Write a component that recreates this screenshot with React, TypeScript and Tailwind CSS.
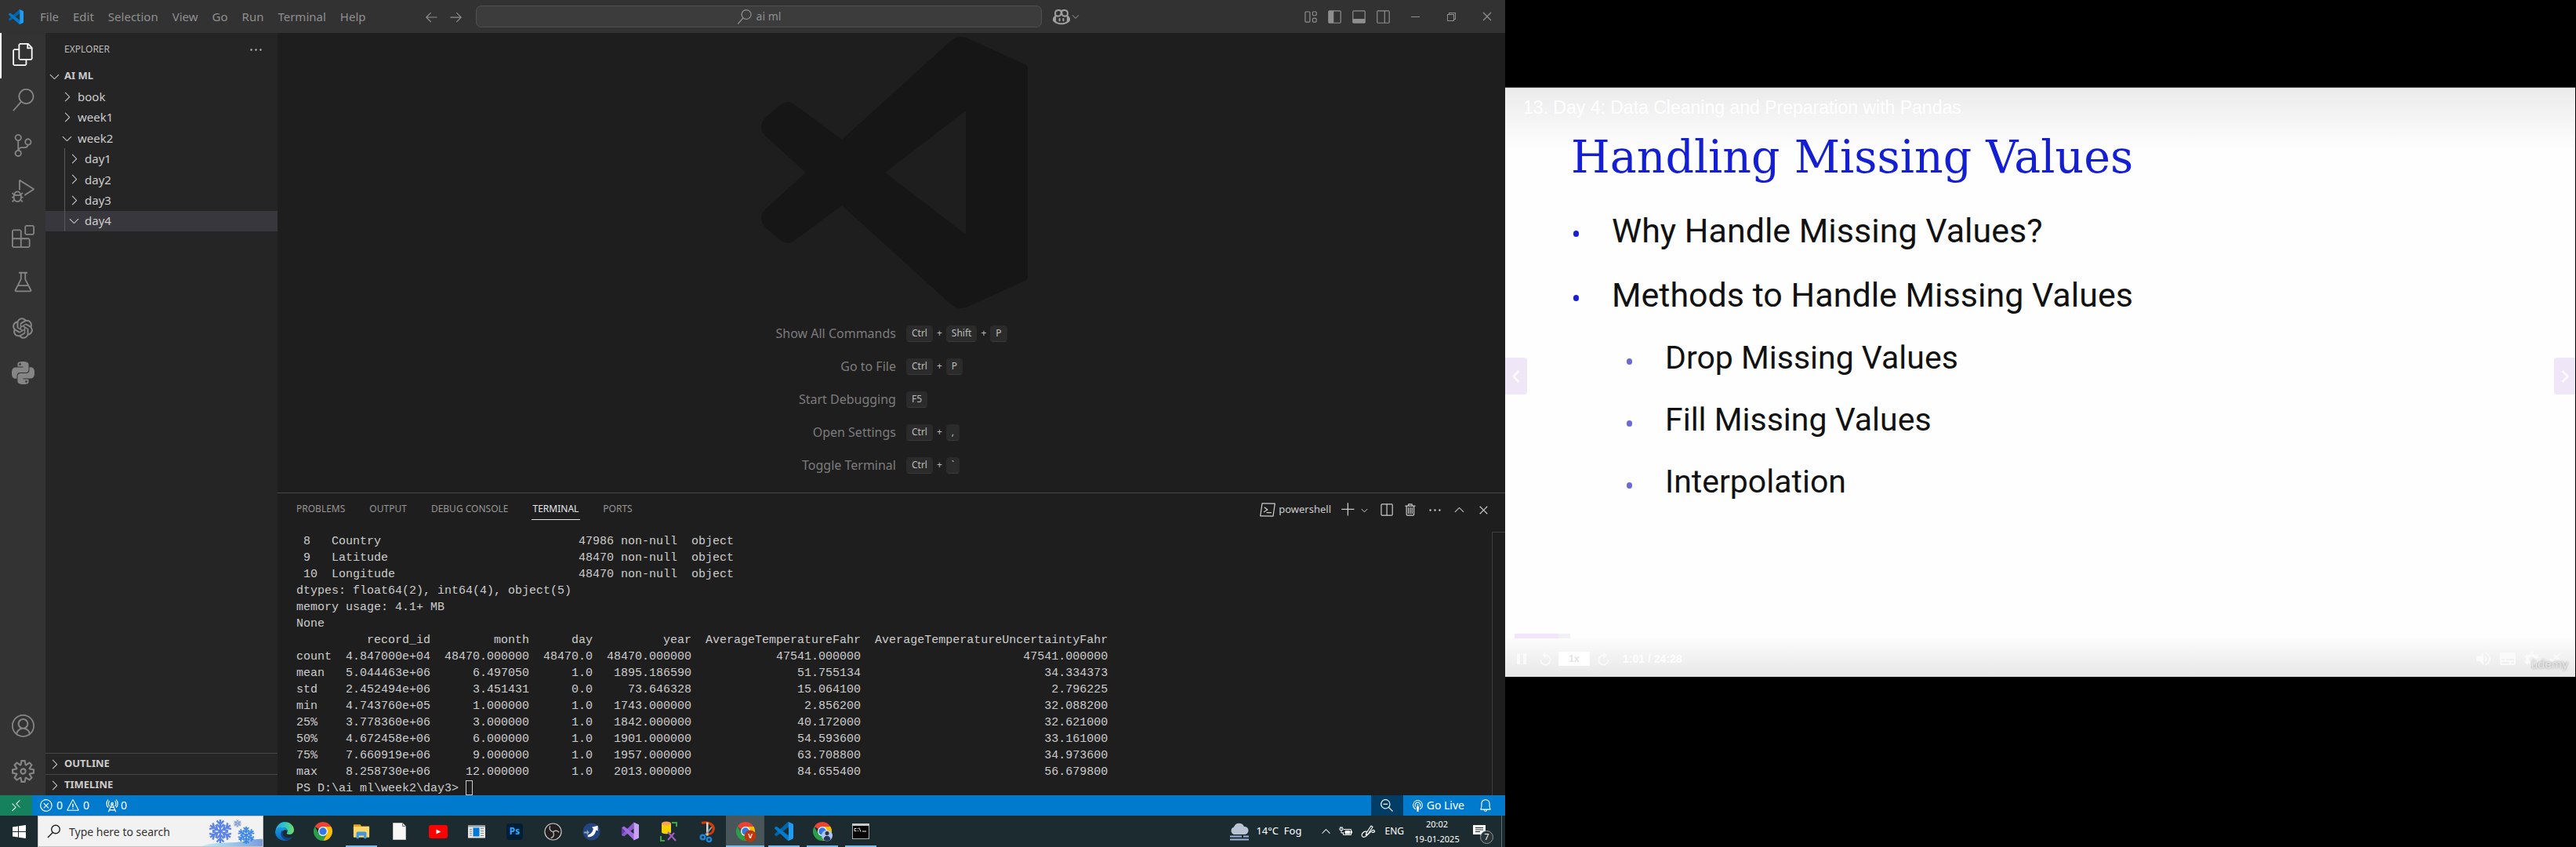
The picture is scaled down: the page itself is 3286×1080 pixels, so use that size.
import type { ReactNode } from "react";
import {
  VscFiles, VscSearch, VscSourceControl, VscDebugAlt, VscExtensions, VscBeaker, VscAccount, VscSettingsGear,
  VscChevronRight, VscChevronDown, VscChevronUp, VscEllipsis, VscArrowLeft, VscArrowRight, VscCopilot, VscLayout,
  VscLayoutSidebarLeft, VscLayoutPanel, VscLayoutSidebarRightOff, VscChromeMinimize, VscChromeRestore,
  VscChromeClose, VscTerminalPowershell, VscAdd, VscSplitHorizontal, VscTrash, VscClose, VscRemote, VscError,
  VscWarning, VscRadioTower, VscZoomOut, VscBroadcast, VscBell,
} from "react-icons/vsc";
import { SiPython } from "react-icons/si";
import { AiOutlineOpenAI } from "react-icons/ai";
import { MdPause, MdReplay, MdVolumeUp, MdSubtitles, MdSettings, MdCloseFullscreen } from "react-icons/md";

const UI = "font-['Noto_Sans','Liberation_Sans',sans-serif]";

/* ---------- VS Code ---------- */

function CodeLogo({ className }: { className: string }) {
  return (
    <svg viewBox="0 0 100 100" className={className} aria-hidden="true">
      <path d="M96.5 10.6 75.9.9a6.2 6.2 0 0 0-7.1 1.2L1.4 63.6a4.2 4.2 0 0 0 0 6.2l5.5 5a4.2 4.2 0 0 0 5.3.2l81.2-61.6c2.7-2 6.600-.1 6.600 3.300v-.2a6.200 6.200 0 0 0-3.500-5.900Z" fill="#0065a9" />
      <path d="m96.500 89.400-20.600 9.700a6.200 6.200 0 0 1-7.100-1.200L1.400 36.400a4.200 4.200 0 0 1 0-6.200l5.500-5a4.200 4.200 0 0 1 5.300-.2l81.200 61.600c2.700 2 6.600.1 6.600-3.300v.2a6.200 6.200 0 0 1-3.500 5.900Z" fill="#007acc" />
      <path d="M75.900 99.100a6.200 6.200 0 0 1-7.100-1.200c2.300 2.300 6.200.7 6.200-2.600V4.700c0-3.300-3.900-4.900-6.200-2.600a6.200 6.200 0 0 1 7.100-1.200l20.600 9.900a6.200 6.200 0 0 1 3.500 5.600v67.200a6.200 6.200 0 0 1-3.500 5.600Z" fill="#1f9cf0" />
    </svg>
  );
}

const menus = ["File", "Edit", "Selection", "View", "Go", "Run", "Terminal", "Help"];

function TitleBar() {
  return (
    <header className="flex h-[42px] shrink-0 items-center bg-[#323233] text-[15px] text-[#8f8f8f]">
      <div className="flex w-[600px] shrink-0 items-center">
        <CodeLogo className="ml-[11px] h-[19px] w-[19px]" />
        <nav className="ml-3 flex" aria-label="Menu bar">
          {menus.map((m) => (
            <button key={m} className="px-[9px]">{m}</button>
          ))}
        </nav>
        <div className="ml-auto flex gap-3 pr-[9px]">
          <button aria-label="Go back"><VscArrowLeft size={19} /></button>
          <button aria-label="Go forward"><VscArrowRight size={19} /></button>
        </div>
      </div>
      <button className="ml-[7px] flex h-7 w-[722px] items-center justify-center gap-[6px] rounded-[7px] border border-[#505051] bg-[#3c3c3c] text-sm">
        <VscSearch size={19} />
        ai ml
      </button>
      <button aria-label="Copilot" className="ml-[14px] flex items-center">
        <VscCopilot size={22} className="text-[#a0a0a0]" />
        <VscChevronDown size={14} />
      </button>
      <div className="ml-auto flex items-center gap-3 pr-[6px]">
        <button aria-label="Customize layout"><VscLayout size={19} /></button>
        <button aria-label="Toggle side bar"><VscLayoutSidebarLeft size={19} /></button>
        <button aria-label="Toggle panel"><VscLayoutPanel size={19} /></button>
        <button aria-label="Toggle secondary side bar"><VscLayoutSidebarRightOff size={19} /></button>
        <button aria-label="Minimize" className="ml-[2px] flex w-[34px] justify-center"><VscChromeMinimize size={16} /></button>
        <button aria-label="Restore" className="flex w-[34px] justify-center"><VscChromeRestore size={16} /></button>
        <button aria-label="Close" className="flex w-[34px] justify-center"><VscChromeClose size={16} /></button>
      </div>
    </header>
  );
}

function Activity({ label, active, children }: { label: string; active?: boolean; children: ReactNode }) {
  return (
    <button
      aria-label={label}
      className={
        active
          ? "flex h-[58px] w-full items-center justify-center border-l-2 border-white pr-[2px] pb-[3px] text-white"
          : "flex h-[58px] w-full items-center justify-center pb-[3px] text-[#858585]"
      }
    >
      {children}
    </button>
  );
}

function ActivityBar() {
  return (
    <nav aria-label="Activity bar" className="flex w-[58px] shrink-0 flex-col justify-between bg-[#333333]">
      <div>
        <Activity label="Explorer" active><VscFiles size={29} /></Activity>
        <Activity label="Search"><VscSearch size={29} /></Activity>
        <Activity label="Source control"><VscSourceControl size={29} /></Activity>
        <Activity label="Run and debug"><VscDebugAlt size={29} /></Activity>
        <Activity label="Extensions"><VscExtensions size={29} /></Activity>
        <Activity label="Testing"><VscBeaker size={29} /></Activity>
        <Activity label="ChatGPT"><AiOutlineOpenAI size={34} /></Activity>
        <Activity label="Python"><SiPython size={29} /></Activity>
      </div>
      <div>
        <Activity label="Accounts"><VscAccount size={29} /></Activity>
        <Activity label="Manage"><VscSettingsGear size={29} /></Activity>
      </div>
    </nav>
  );
}

const tree = [
  { name: "book", depth: 0, open: false },
  { name: "week1", depth: 0, open: false },
  { name: "week2", depth: 0, open: true },
  { name: "day1", depth: 1, open: false },
  { name: "day2", depth: 1, open: false },
  { name: "day3", depth: 1, open: false },
  { name: "day4", depth: 1, open: true },
];

function SideBar() {
  return (
    <aside className="flex w-[296px] shrink-0 flex-col bg-[#252526] text-[#cccccc]">
      <div className="flex h-[42px] items-center justify-between pr-[18px] pl-6 text-xs text-[#bbbbbb]">
        <h2>EXPLORER</h2>
        <button aria-label="Views and more actions"><VscEllipsis size={19} /></button>
      </div>
      <button className="flex h-[26px] items-center gap-[3px] pl-[2px] text-[13px] font-bold">
        <VscChevronDown size={19} />
        AI ML
      </button>
      <ul className="flex h-[185px] flex-col text-[15px]">
        {tree.map((n) => (
          <li key={n.name} className={n.name === "day4" ? "flex flex-1 bg-[#37373d]" : "flex flex-1"}>
            <button className={n.depth ? "ml-6 flex w-full items-center gap-1 border-l border-[#585858] pl-[2px]" : "flex w-full items-center gap-1 pl-[18px]"}>
              {n.open ? <VscChevronDown size={19} /> : <VscChevronRight size={19} />}
              {n.name}
            </button>
          </li>
        ))}
      </ul>
      <div className="mt-auto text-[13px] font-bold">
        {["OUTLINE", "TIMELINE"].map((t) => (
          <button key={t} className="flex h-[27px] w-full items-center gap-[3px] border-t border-[#474748] pl-[2px]">
            <VscChevronRight size={19} />
            {t}
          </button>
        ))}
      </div>
    </aside>
  );
}

const shortcuts = [
  { label: "Show All Commands", keys: ["Ctrl", "Shift", "P"] },
  { label: "Go to File", keys: ["Ctrl", "P"] },
  { label: "Start Debugging", keys: ["F5"] },
  { label: "Open Settings", keys: ["Ctrl", ","] },
  { label: "Toggle Terminal", keys: ["Ctrl", "`"] },
];

function Welcome() {
  return (
    <div className="flex flex-1 flex-col items-center pt-[5px]">
      <svg viewBox="0 0 340 346" className="ml-2 h-[346px] w-[340px]" aria-hidden="true">
        <path
          fill="#161616"
          fillRule="evenodd"
          d="M103 131 242 5Q254-4 266 3L336 35Q340 37 340 40V306Q340 309 336 311L266 343Q254 350 242 341L103 215 42 260Q34 266 26 260L6 244Q-6 231 6 219L57 173 6 127Q-6 115 6 102L26 86Q34 80 42 86ZM261 94 158 173 261 252Z"
        />
      </svg>
      <dl className="mt-[11px] grid grid-cols-[auto_auto] gap-x-[13px]">
        {shortcuts.map((s) => (
          <div key={s.label} className="contents">
            <dt className="flex h-[42px] items-center justify-end text-base text-[#7c7c7c]">{s.label}</dt>
            <dd className="flex h-[42px] items-center gap-[5px] text-xs text-[#bdbdbd]">
              {s.keys.map((k, i) => (
                <span key={k} className="flex items-center gap-[5px]">
                  {i > 0 && <span>+</span>}
                  <kbd className={`${UI} flex h-[21px] min-w-[17px] items-center justify-center rounded border border-b-[#3a3a3b] border-[#2a2a2b] bg-[#2b2b2c] px-[6px]`}>{k}</kbd>
                </span>
              ))}
            </dd>
          </div>
        ))}
      </dl>
    </div>
  );
}

const info = [
  [" 8   Country", "47986 non-null  object"],
  [" 9   Latitude", "48470 non-null  object"],
  [" 10  Longitude", "48470 non-null  object"],
];

const stats = [
  ["", "record_id", "month", "day", "year", "AverageTemperatureFahr", "AverageTemperatureUncertaintyFahr"],
  ["count", "4.847000e+04", "48470.000000", "48470.0", "48470.000000", "47541.000000", "47541.000000"],
  ["mean", "5.044463e+06", "6.497050", "1.0", "1895.186590", "51.755134", "34.334373"],
  ["std", "2.452494e+06", "3.451431", "0.0", "73.646328", "15.064100", "2.796225"],
  ["min", "4.743760e+05", "1.000000", "1.0", "1743.000000", "2.856200", "32.088200"],
  ["25%", "3.778360e+06", "3.000000", "1.0", "1842.000000", "40.172000", "32.621000"],
  ["50%", "4.672458e+06", "6.000000", "1.0", "1901.000000", "54.593600", "33.161000"],
  ["75%", "7.660919e+06", "9.000000", "1.0", "1957.000000", "63.708800", "34.973600"],
  ["max", "8.258730e+06", "12.000000", "1.0", "2013.000000", "84.655400", "56.679800"],
];
const widths = [5, 14, 14, 9, 14, 24, 35];

const output = [
  ...info.map(([a, b]) => a.padEnd(40) + b),
  "dtypes: float64(2), int64(4), object(5)",
  "memory usage: 4.1+ MB",
  "None",
  ...stats.map((r) => r.map((c, i) => (i === 0 ? c.padEnd(5) : c.padStart(widths[i]))).join("")),
].join("\n");

const tabs = ["PROBLEMS", "OUTPUT", "DEBUG CONSOLE", "TERMINAL", "PORTS"];

function Panel() {
  return (
    <section className="border-t border-[#454545] text-[#cccccc]">
      <div className="flex h-[49px] items-start justify-between pr-[18px] pl-[22px]">
        <div role="tablist" className="flex gap-[27px] pt-[7px] text-xs text-[#969696]">
          {tabs.map((t) => (
            <button
              key={t}
              role="tab"
              aria-selected={t === "TERMINAL"}
              className={t === "TERMINAL" ? "h-[27px] border-b border-[#e7e7e7] px-[2px] text-[#e7e7e7]" : "h-[27px] border-b border-transparent px-[2px]"}
            >
              {t}
            </button>
          ))}
        </div>
        <div className="flex h-[42px] items-center gap-3 text-[13px]">
          <button className="flex items-center gap-1"><VscTerminalPowershell size={20} />powershell</button>
          <div className="flex items-center">
            <button aria-label="New terminal"><VscAdd size={20} /></button>
            <button aria-label="Launch profile" className="ml-1"><VscChevronDown size={13} /></button>
          </div>
          <button aria-label="Split terminal"><VscSplitHorizontal size={19} /></button>
          <button aria-label="Kill terminal"><VscTrash size={19} /></button>
          <button aria-label="More actions"><VscEllipsis size={19} /></button>
          <button aria-label="Maximize panel"><VscChevronUp size={19} /></button>
          <button aria-label="Close panel"><VscClose size={19} /></button>
        </div>
      </div>
      <div className="flex justify-between">
        <pre className="-mb-[2px] pt-[2px] pl-6 font-['Liberation_Mono',monospace] text-[15px] leading-[21px]">
          {output}
          {"\nPS D:\\ai ml\\week2\\day3> "}
          <span className="inline-block h-[19px] w-[9px] border border-[#cccccc] align-top" />
        </pre>
        <div className="w-[17px] border-t border-l border-[#3f3f40]" />
      </div>
    </section>
  );
}

function StatusBar() {
  return (
    <footer className="flex h-[26px] shrink-0 items-center justify-between bg-[#007acc] text-sm text-white">
      <div className="flex h-full items-center">
        <button aria-label="Remote" className="flex h-full w-[41px] items-center justify-center bg-[#16825d]"><VscRemote size={17} /></button>
        <button className="ml-[9px] flex items-center gap-1"><VscError size={18} />0<VscWarning size={18} />0</button>
        <button className="ml-[19px] flex items-center gap-[2px]"><VscRadioTower size={19} />0</button>
      </div>
      <div className="flex h-full items-center">
        <button aria-label="Zoom out" className="flex h-full w-[41px] items-center justify-center bg-[#003d66]"><VscZoomOut size={18} /></button>
        <button className="ml-[10px] flex items-center gap-[3px]"><VscBroadcast size={17} />Go Live</button>
        <button aria-label="Notifications" className="mr-4 ml-[18px]"><VscBell size={18} /></button>
      </div>
    </footer>
  );
}

/* ---------- Windows taskbar ---------- */

function Chrome({ children }: { children?: ReactNode }) {
  return (
    <svg viewBox="0 0 48 48" className="h-6 w-6 overflow-visible" aria-hidden="true">
      <path d="M24 24 3.200 12A24 24 0 0 1 44.800 12Z" fill="#ea4335" />
      <path d="M24 12H44.800A24 24 0 0 1 24 48L34.400 30Z" fill="#fbbc04" />
      <path d="M34.400 30 24 48A24 24 0 0 1 3.200 12L13.600 30Z" fill="#2b9f48" />
      <circle cx="24" cy="24" r="12" fill="#fff" />
      <circle cx="24" cy="24" r="9.500" fill="#3478e5" />
      {children}
    </svg>
  );
}

function Edge() {
  return (
    <svg viewBox="0 0 48 48" className="h-6 w-6" aria-hidden="true">
      <defs>
        <linearGradient id="edgeTop" x1="0" y1="0" x2="1" y2="0"><stop offset="0" stopColor="#2aa5e0" /><stop offset=".5" stopColor="#2fc4c8" /><stop offset="1" stopColor="#6fe05c" /></linearGradient>
        <linearGradient id="edgeSide" x1="0" y1="0" x2="0" y2="1"><stop offset="0" stopColor="#1a9be0" /><stop offset="1" stopColor="#0d64bd" /></linearGradient>
      </defs>
      <path d="M1 24C2 10 12 0 24 0c14 0 24 10 24 20 0 8-6 12-12 12-5 0-8-2-6-4 4-5 0-14-10-14C11 13 4 17 1 24Z" fill="url(#edgeTop)" />
      <path d="M0 25C2 17 10 13 19 14c7 0 11 4 12 9-4-5-13-2-13 5 0 8 7 14 16 14 3 0 6-1 9-3-4 6-11 9-18 9C11 48 0 38 0 25Z" fill="url(#edgeSide)" />
      <path d="M18 21c-8 9-2 23 12 26 6-1 11-4 14-9-8 5-24 3-25-10 0-3 0-5-1-7Z" fill="#123f8a" />
    </svg>
  );
}

function Explorer() {
  return (
    <svg viewBox="0 0 24 24" className="h-[22px] w-[22px]" aria-hidden="true">
      <path d="M1 3.500a1 1 0 0 1 1-1h8.500L12 5h11v5H1Z" fill="#e8a31a" />
      <rect x="1" y="5.500" width="22" height="15" rx="1" fill="#fbd66a" />
      <path d="M5 22v-7.500A2 2 0 0 1 7 12.500h10a2 2 0 0 1 2 2V22h-3.500v-4h-7v4Z" fill="#3f97dd" />
    </svg>
  );
}

function Page() {
  return (
    <svg viewBox="0 0 17 22" className="h-[22px] w-[17px]" aria-hidden="true">
      <path d="M.5.500h12l4 4v17H.5Z" fill="#f7f7f7" stroke="#c4c4c4" />
      <path d="M12.500.500v4h4" fill="#ddd" stroke="#777" />
    </svg>
  );
}

function YouTube() {
  return (
    <svg viewBox="0 0 24 17" className="h-[17px] w-6" aria-hidden="true">
      <rect width="24" height="17" rx="3" fill="#f00" />
      <path d="M9.500 5.500v6l6-3Z" fill="#fff" />
    </svg>
  );
}

function News() {
  return (
    <svg viewBox="0 0 22 16" className="h-[17px] w-[22px]" aria-hidden="true">
      <rect width="22" height="16" fill="#e8e8e8" />
      <rect width="22" height="2" fill="#9aa0a4" />
      <rect x="6.500" y="3" width="8" height="11" fill="#0078d7" />
      <path d="M2 5h3M2 7.500h3M2 10h3M2 12.500h3M16 4h4M16 7h4M16 10h4M16 13h4" stroke="#8b8b8b" />
    </svg>
  );
}

function Photoshop() {
  return (
    <span className="flex h-[21px] w-[21px] items-center justify-center rounded bg-[#001e36] text-xs font-bold text-[#31a8ff]">Ps</span>
  );
}

function Obs() {
  return (
    <svg viewBox="0 0 24 24" className="h-[23px] w-[23px]" aria-hidden="true">
      <circle cx="12" cy="12" r="11" fill="#231f20" stroke="#c9c9c9" strokeWidth="1.200" />
      <path d="M8 4.500c-2 4 1 7.500 4.500 7.500M20 13c-2.500-3.500-6.500-3-8 0M9 20.500c4-1 5-5 3-8" fill="none" stroke="#c9c9c9" strokeWidth="1.300" />
    </svg>
  );
}

function Launcher() {
  return (
    <svg viewBox="0 0 24 24" className="h-[23px] w-[23px]" aria-hidden="true">
      <circle cx="12" cy="12" r="11.500" fill="#23457f" />
      <path d="M7 19c6 1 10-3 11-9l2.500 1V4l-8 2 2 2c-1 4-3 7-7.500 8.500Z" fill="#fff" />
      <path d="M2 12h4V9.500l3 3.500-3 3.500V14H2Z" fill="#8fa6bd" />
    </svg>
  );
}

function VisualStudio() {
  return (
    <svg viewBox="0 0 24 24" className="h-6 w-6" aria-hidden="true">
      <path d="M16.500.500v8L4 18.500 1 17V16Z" fill="#8a5cd0" />
      <path d="M1 7.500 4 5.500l13 10V23.500Z" fill="#a06be0" />
      <path d="M16.500.500 23 3.500v17L16.500 23.500Z" fill="#c9a0f5" />
      <path d="M1 7.500v9l4-4.500Z" fill="#6a3cb0" />
    </svg>
  );
}

function DataStudio() {
  return (
    <svg viewBox="0 0 24 28" className="h-7 w-6" aria-hidden="true">
      <path d="M3 4v11c0 3 12 3 12 0V4Z" fill="#f7d000" />
      <ellipse cx="9" cy="4" rx="6" ry="2.500" fill="#f5a25d" />
      <path d="M16 3h6v5M2 20v6h5" fill="none" stroke="#3da544" strokeWidth="2" />
      <path d="m11 25 8-9M11 15l10 11" stroke="#a05bc0" strokeWidth="2.200" />
    </svg>
  );
}

function Snip() {
  return (
    <svg viewBox="0 0 24 28" className="h-[29px] w-[24px]" aria-hidden="true">
      <path d="M5 3c9-3 17 3 15 9-1 4-4 5-7 5" fill="none" stroke="#d83b01" strokeWidth="3" />
      <path d="M11 2h2.500v17H11Z" fill="#d8d8d8" />
      <path d="m18 8-8 10" stroke="#9a9a9a" strokeWidth="2" />
      <circle cx="6.500" cy="21" r="2.800" fill="none" stroke="#1a86d9" strokeWidth="2.400" />
      <circle cx="14.500" cy="24" r="2.600" fill="none" stroke="#1a86d9" strokeWidth="2.400" />
    </svg>
  );
}

function Cmd() {
  return (
    <svg viewBox="0 0 22 20" className="h-5 w-[22px]" aria-hidden="true">
      <rect x=".5" y=".5" width="21" height="19" fill="#050505" stroke="#a9a9a9" />
      <rect width="22" height="3" fill="#c9c9c9" />
      <path d="M3 6.500h2.500M3 6.500v3h2.500M7.500 6v1M7.500 9v1M9 5.500l2 5M13 10h5" fill="none" stroke="#eee" />
    </svg>
  );
}

const apps: { name: string; icon: ReactNode; state: string }[] = [
  { name: "Edge", icon: <Edge />, state: "idle" },
  { name: "Chrome", icon: <Chrome />, state: "idle" },
  { name: "File Explorer", icon: <Explorer />, state: "open" },
  { name: "Document", icon: <Page />, state: "idle" },
  { name: "YouTube", icon: <YouTube />, state: "idle" },
  { name: "News", icon: <News />, state: "idle" },
  { name: "Photoshop", icon: <Photoshop />, state: "idle" },
  { name: "OBS Studio", icon: <Obs />, state: "idle" },
  { name: "Launcher", icon: <Launcher />, state: "idle" },
  { name: "Visual Studio", icon: <VisualStudio />, state: "idle" },
  { name: "Data Studio", icon: <DataStudio />, state: "idle" },
  { name: "Snipping Tool", icon: <Snip />, state: "idle" },
  {
    name: "Chrome, work profile",
    icon: (
      <Chrome>
        <circle cx="36" cy="36" r="15" fill="#bf360c" />
        <text x="36" y="42" textAnchor="middle" fontSize="18" fill="#fff" fontWeight="600">V</text>
      </Chrome>
    ),
    state: "active",
  },
  { name: "Visual Studio Code", icon: <CodeLogo className="h-6 w-6" />, state: "open" },
  {
    name: "Chrome, personal profile",
    icon: (
      <Chrome>
        <circle cx="36" cy="35" r="14" fill="#a9c6ee" />
        <circle cx="36" cy="29" r="5" fill="#3a2c33" />
        <path d="M27 45c1-13 17-13 18 0a14 14 0 0 1-18 0Z" fill="#25365e" />
      </Chrome>
    ),
    state: "open",
  },
  { name: "Command Prompt", icon: <Cmd />, state: "open" },
];

function Flake({ cx, cy, r, color }: { cx: number; cy: number; r: number; color: string }) {
  return (
    <g transform={`translate(${cx} ${cy}) scale(${r})`} stroke={color} strokeWidth=".16" fill="none">
      {[0, 60, 120, 180, 240, 300].map((a) => (
        <path key={a} transform={`rotate(${a})`} d="M0 0V-1M-.3-.9 0-.6 .3-.9M-.3-.6 0-.3 .3-.6" />
      ))}
    </g>
  );
}

function Taskbar() {
  return (
    <div className="flex h-10 shrink-0 items-center bg-[#1b2b30] text-white">
      <button aria-label="Start" className="flex h-full w-12 items-center justify-center">
        <svg viewBox="0 0 17 17" className="h-[17px] w-[17px]" fill="#fff" aria-hidden="true">
          <path d="M0 2.400 7 1.400V8H0ZM8 1.300 17 0v8H8ZM0 9h7v6.600L0 14.600ZM8 9h9v8l-9-1.300Z" />
        </svg>
      </button>
      <label className="flex h-full w-[288px] items-center border border-[#c4c4c4] bg-[#f2f2f2] pl-[11px] text-[#222]">
        <svg viewBox="0 0 18 18" className="h-[18px] w-[18px]" fill="none" stroke="#222" strokeWidth="1.400" aria-hidden="true">
          <circle cx="11" cy="6.500" r="5.300" />
          <path d="M7.300 10.400 1 17" />
        </svg>
        <input aria-label="Search" placeholder="Type here to search" className="ml-[10px] w-[166px] bg-transparent text-[14px] outline-none placeholder:text-[#333]" />
        <svg viewBox="0 0 78 38" className="ml-auto h-[38px] w-[78px]" aria-hidden="true">
          <defs>
            <linearGradient id="snow" x1="0" x2="1"><stop offset="0" stopColor="#b9f2fa" /><stop offset="1" stopColor="#7b9ddb" /></linearGradient>
          </defs>
          <path d="M0 38C12 33 30 34 44 33 58 32 68 28 78 29v9Z" fill="url(#snow)" />
          <Flake cx={24} cy={19} r={15} color="#5b83e8" />
          <Flake cx={46} cy={9} r={5} color="#8099d0" />
          <Flake cx={57} cy={24} r={11} color="#3c86e6" />
        </svg>
      </label>
      <div className="ml-[2px] flex h-full">
        {apps.map((a) => (
          <button
            key={a.name}
            aria-label={a.name}
            className={a.state === "active" ? "flex h-full w-[49px] flex-col items-center bg-[#495659]" : "flex h-full w-[49px] flex-col items-center"}
          >
            <span className="flex flex-1 items-center pt-[2px]">{a.icon}</span>
            <span className={a.state === "idle" ? "h-[2px] w-10" : a.state === "open" ? "h-[2px] w-10 bg-[#76b9ed]" : "h-[2px] w-full bg-[#76b9ed]"} />
          </button>
        ))}
      </div>
      <div className="ml-auto flex h-full items-center text-[13px]">
        <button className="flex items-center gap-[9px]">
          <svg viewBox="0 0 24 24" className="h-6 w-6" aria-hidden="true">
            <path d="M5 16a5 5 0 0 1 0-9.500A7 7 0 0 1 18 6a5 5 0 0 1 1 10Z" fill="#b9c3d4" />
            <path d="M0 18.500h15M17 18.500h7M0 22.500h24" stroke="#9fb2dd" strokeWidth="1.800" />
          </svg>
          <span>14°C&nbsp; Fog</span>
        </button>
        <button aria-label="Show hidden icons" className="ml-[23px]"><VscChevronUp size={17} /></button>
        <svg viewBox="0 0 18 14" className="ml-2 h-[14px] w-[18px]" fill="none" stroke="#fff" aria-hidden="true">
          <path d="M6 4.500h9.500v7h-10V8M16.500 6.500v3M1 3h4v2.500H1ZM2 3V1M4 3V1M3 6v3h2" />
          <path d="M8 6.500h6v3.500H8Z" fill="#fff" />
        </svg>
        <svg viewBox="0 0 18 18" className="ml-[10px] h-[18px] w-[18px]" fill="none" stroke="#fff" strokeWidth="1.200" aria-hidden="true">
          <path d="M7 11 13 2l2 1.500L9 12.500 6.500 13.500ZM8 9.500C3 8-1 14 2.500 16S8 13 11 11s4-5 6-3-2 3-3 2" />
        </svg>
        <span className="ml-3 text-xs">ENG</span>
        <div className="ml-3 flex w-[60px] flex-col items-center text-[11px] leading-[19px]">
          <time>20:02</time>
          <time>19-01-2025</time>
        </div>
        <button aria-label="Notifications" className="relative mr-[10px] ml-4 h-6 w-[26px]">
          <svg viewBox="0 0 16 18" className="h-[18px] w-4" aria-hidden="true">
            <path d="M0 1h16v12h-3v4l-4-4H0Z" fill="#fff" />
            <path d="M3 4.500h10M3 7h10M3 9.500h6" stroke="#1b2b30" />
          </svg>
          <span className="absolute right-0 -bottom-1 flex h-[17px] w-[17px] items-center justify-center rounded-full border border-[#8d979b] bg-[#2b3538] text-[11px]">7</span>
        </button>
        <div className="mr-1 h-full w-px bg-[#5f6b6f]" />
      </div>
    </div>
  );
}

/* ---------- Course video ---------- */

function Bullet({ sub, children }: { sub?: boolean; children: ReactNode }) {
  return (
    <li className={sub ? "flex h-[79px] items-center gap-[42px] pl-[155px] text-[41px]" : "flex h-[82px] items-center gap-[42px] pl-[87px] text-[43px]"}>
      <span className={sub ? "mt-2 h-2 w-[7px] rounded-full bg-[#6b6bd8]" : "mt-2 h-2 w-[7px] rounded-full bg-[#1a1fd0]"} />
      <span>{children}</span>
    </li>
  );
}

function Chevron({ flip }: { flip?: boolean }) {
  return (
    <svg viewBox="0 0 10 16" className={flip ? "h-4 w-[10px] -scale-x-100" : "h-4 w-[10px]"} fill="none" stroke="currentColor" strokeWidth="2.500" aria-hidden="true">
      <path d="m1.500 1 7 7-7 7" />
    </svg>
  );
}

function Video() {
  return (
    <main className="min-w-0 flex-[1366] bg-black pt-[111px]">
      <section aria-label="Video player" className="relative mr-px aspect-[1365/752] overflow-hidden border-t border-[#555] bg-[#fefefe]">
        <div className="absolute inset-x-0 top-0 h-20 bg-gradient-to-b from-[#ebebeb] to-transparent" />
        <div className="absolute inset-x-0 bottom-0 h-[52px] bg-gradient-to-t from-[#e6e7e6] to-transparent" />
        <p className="absolute top-2 left-[23px] font-['Liberation_Sans',sans-serif] text-[23px] text-white">13. Day 4: Data Cleaning and Preparation with Pandas</p>

        <div className="relative pt-[53px]">
          <h1 className="pl-[84px] font-['DejaVu_Serif',serif] text-[57px] leading-[70px] text-[#141ed2]">Handling Missing Values</h1>
          <ul className="mt-[18px] font-['Roboto',sans-serif] text-[#111]">
            <Bullet>Why Handle Missing Values?</Bullet>
            <Bullet>Methods to Handle Missing Values</Bullet>
            <Bullet sub>Drop Missing Values</Bullet>
            <Bullet sub>Fill Missing Values</Bullet>
            <Bullet sub>Interpolation</Bullet>
          </ul>
        </div>

        <button aria-label="Previous lecture" className="absolute top-[344px] left-0 flex h-[47px] w-[28px] items-center justify-center rounded-r-sm bg-[#efe6f8] text-white">
          <Chevron flip />
        </button>
        <button aria-label="Next lecture" className="absolute top-[344px] right-0 flex h-[47px] w-[27px] items-center justify-center rounded-l-sm bg-[#efe6f8] text-white">
          <Chevron />
        </button>

        <div className="absolute inset-x-3 bottom-[11px] text-[#fafafa]">
          <input
            type="range"
            aria-label="Seek"
            defaultValue={4}
            className="block h-[6px] w-full appearance-none bg-[linear-gradient(to_right,#f3e6fb_56px,#f1f1f3_56px,#f1f1f3_71px,transparent_71px)] [&::-webkit-slider-thumb]:h-0 [&::-webkit-slider-thumb]:w-0 [&::-webkit-slider-thumb]:appearance-none"
          />
          <div className="mt-[14px] flex h-6 items-center font-['Liberation_Sans',sans-serif]">
            <button aria-label="Pause" className="-ml-[3px]"><MdPause size={24} /></button>
            <button aria-label="Back 5 seconds" className="ml-2"><MdReplay size={21} /></button>
            <button className="ml-[6px] h-[18px] w-10 bg-white text-xs font-bold text-[#e3e4e8]">1x</button>
            <button aria-label="Forward 5 seconds" className="ml-[7px] -scale-x-100"><MdReplay size={21} /></button>
            <span className="ml-[14px] text-sm font-bold text-white">1:01 / 24:28</span>
            <span className="ml-auto flex items-center gap-[7px]">
              <button aria-label="Volume"><MdVolumeUp size={24} /></button>
              <button aria-label="Captions"><MdSubtitles size={24} /></button>
              <button aria-label="Settings"><MdSettings size={23} /></button>
              <button aria-label="Exit full screen" className="mr-1"><MdCloseFullscreen size={21} /></button>
            </span>
          </div>
        </div>
        <span className="absolute right-[9px] bottom-[5px] font-['Lato',sans-serif] text-base text-[#e6e6e6] [text-shadow:0_0_3px_#888]">ûdemy</span>
      </section>
    </main>
  );
}

export default function App() {
  return (
    <div className={`${UI} flex h-screen w-full overflow-hidden bg-black`}>
      <div className="flex min-w-0 flex-[1920] flex-col bg-[#1e1e1e]">
        <TitleBar />
        <div className="flex min-h-0 flex-1">
          <ActivityBar />
          <SideBar />
          <div className="flex min-w-0 flex-1 flex-col">
            <Welcome />
            <Panel />
          </div>
        </div>
        <StatusBar />
        <Taskbar />
      </div>
      <Video />
    </div>
  );
}
